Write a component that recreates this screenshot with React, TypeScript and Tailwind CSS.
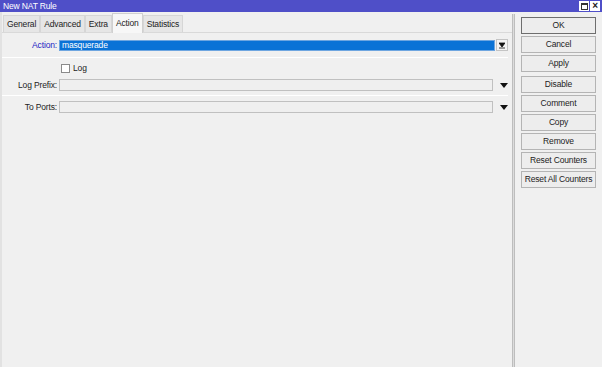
import React from "react"

const font = { fontFamily: '"Liberation Sans", Arial, sans-serif' }

const tabs = ["General", "Advanced", "Extra", "Action", "Statistics"]

const buttons = [
  ["OK", "Cancel", "Apply"],
  ["Disable", "Comment", "Copy", "Remove", "Reset Counters", "Reset All Counters"],
]

const Arrow = () => (
  <svg width="8" height="5" viewBox="0 0 8 5" className="shrink-0">
    <path d="M0 0h8L4 5z" fill="#111" />
  </svg>
)

const Row = ({ label, blue, children }: { label: string; blue?: boolean; children: React.ReactNode }) => (
  <div className="flex items-center h-[12px]">
    <div className={`w-[57px] text-right pr-[2px] whitespace-nowrap ${blue ? "text-[#2424c4]" : "text-[#222]"}`}>{label}</div>
    {children}
  </div>
)

const Sep = () => <div className="h-px bg-[#c8c8c8] border-b border-white" />

export default function App() {
  return (
    <div
      style={font}
      className="w-[602px] h-[367px] bg-[#f0f0f0] flex flex-col text-[8.5px] tracking-[-0.15px] text-[#222] overflow-hidden"
    >
      <div className="h-[12px] bg-[#4f4fc8] flex items-center justify-between pl-[3px] pr-[2px] text-white">
        <span className="leading-none">New NAT Rule</span>
        <div className="flex gap-[1px]">
          <div className="w-[10px] h-[10px] bg-white flex items-center justify-center">
            <div className="w-[7px] h-[7px] border border-[#333] border-t-2" />
          </div>
          <div className="w-[10px] h-[10px] bg-white flex items-center justify-center text-[#222] font-bold text-[10px] leading-none">
            ×
          </div>
        </div>
      </div>
      <div className="flex flex-1 border-l-2 border-[#e2e2e2]">
        <div className="flex-1 flex flex-col">
          <div className="flex pt-[3px] pl-[1px] h-[21px] border-b border-[#d9d9d9]">
            {tabs.map((t) => (
              <div
                key={t}
                className={`px-[3px] flex items-center border border-b-0 whitespace-nowrap ${
                  t === "Action"
                    ? "bg-[#f7f7f7] border-[#d0d0d0] -mt-[2px] mb-[-1px]"
                    : "bg-[#e6e6e6] border-[#d6d6d6]"
                }`}
              >
                {t}
              </div>
            ))}
          </div>
          <div className="pt-[6px] pr-[4px] flex flex-col">
            <Row label="Action:" blue>
              <div className="flex-1 h-[11px] bg-[#0a72d6] text-white flex items-center pl-[2px] border border-[#6fa6e0]">
                masquerade
              </div>
              <div className="w-[12px] h-[12px] ml-[1px] bg-[#f4f4f4] border border-[#c4c4c4] flex items-center justify-center">
                <svg width="6" height="7" viewBox="0 0 6 7">
                  <path d="M0 1h6L3 5z M0 6h6" fill="#111" stroke="#111" strokeWidth="0.8" />
                </svg>
              </div>
            </Row>
            <div className="mt-[6px] mb-[5px]">
              <Sep />
            </div>
            <div className="flex items-center h-[10px] pl-[59px] gap-[3px]">
              <div className="w-[9px] h-[9px] border border-[#8a8a8a] bg-white" />
              <span>Log</span>
            </div>
            <div className="mt-[6px]">
              <Row label="Log Prefix:">
                <div className="flex-1 h-[12px] border border-[#c0c0c0] bg-[#efefef] mr-[7px]" />
                <Arrow />
              </Row>
            </div>
            <div className="mt-[4px] mb-[5px]">
              <Sep />
            </div>
            <Row label="To Ports:">
              <div className="flex-1 h-[12px] border border-[#c0c0c0] bg-[#efefef] mr-[7px]" />
              <Arrow />
            </Row>
          </div>
        </div>
        <div className="w-[3px] border-l border-r border-[#bdbdbd] bg-[#dcdcdc] mt-[2px]" />
        <div className="w-[87px] pl-[6px] pt-[5px] flex flex-col gap-[4px]">
          {buttons.map((g, gi) => (
            <div key={gi} className="flex flex-col gap-[2px]">
              {g.map((b) => (
                <div
                  key={b}
                  className={`w-[75px] h-[17px] flex items-center justify-center whitespace-nowrap bg-[#ededed] border ${
                    b === "OK" ? "border-[#6e6e6e]" : "border-[#b4b4b4]"
                  }`}
                >
                  {b}
                </div>
              ))}
            </div>
          ))}
        </div>
      </div>
    </div>
  )
}
